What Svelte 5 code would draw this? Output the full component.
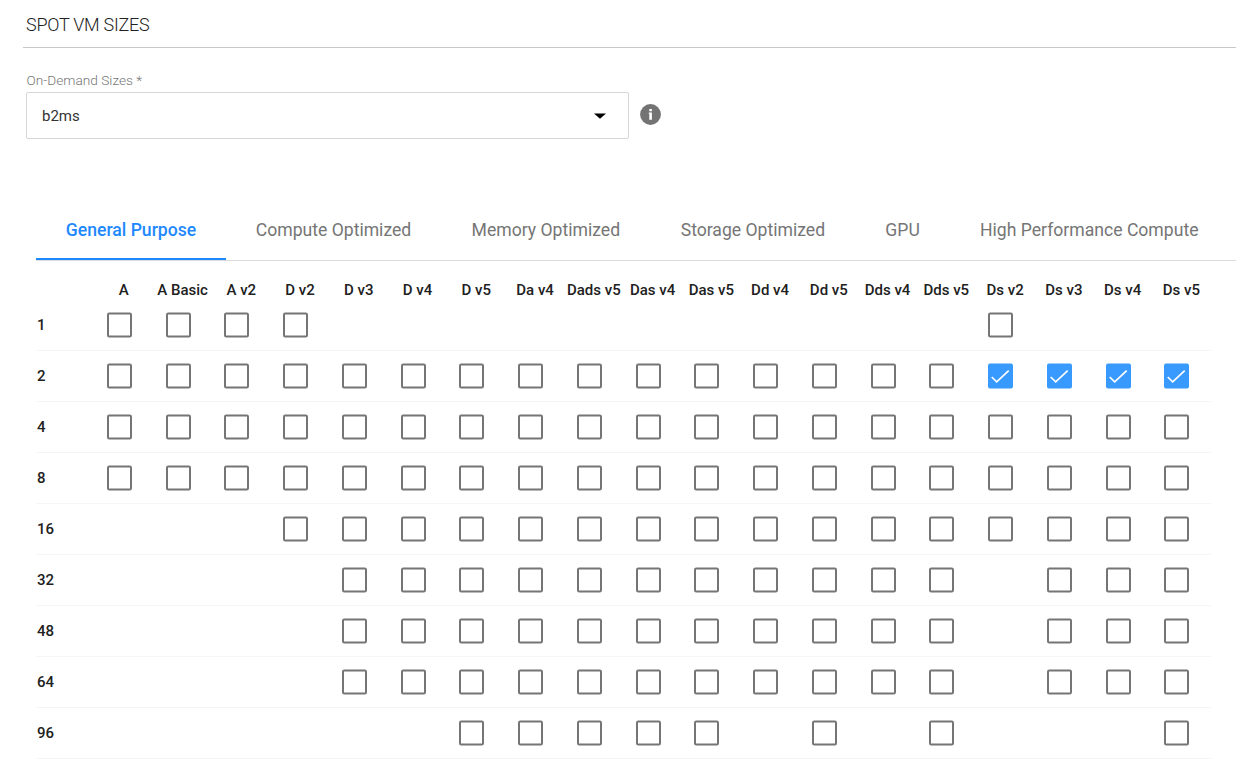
<script>
  const tabs = [
    { name: 'General Purpose', width: 190 },
    { name: 'Compute Optimized', width: 215 },
    { name: 'Memory Optimized', width: 209.6 },
    { name: 'Storage Optimized', width: 204.6 },
    { name: 'GPU', width: 94.8 },
    { name: 'High Performance Compute', width: 278.5 },
  ];
  const families = ['A', 'A Basic', 'A v2', 'D v2', 'D v3', 'D v4', 'D v5', 'Da v4', 'Dads v5', 'Das v4', 'Das v5', 'Dd v4', 'Dd v5', 'Dds v4', 'Dds v5', 'Ds v2', 'Ds v3', 'Ds v4', 'Ds v5'];
  // One character per family: "o" available, "x" selected, "." not offered
  const rows = [
    { cores: 1, cells: 'oooo...........o...' },
    { cores: 2, cells: 'oooooooooooooooxxxx' },
    { cores: 4, cells: 'ooooooooooooooooooo' },
    { cores: 8, cells: 'ooooooooooooooooooo' },
    { cores: 16, cells: '...oooooooooooooooo' },
    { cores: 32, cells: '....ooooooooooo.ooo' },
    { cores: 48, cells: '....ooooooooooo.ooo' },
    { cores: 64, cells: '....ooooooooooo.ooo' },
    { cores: 96, cells: '......ooooo.o.o...o' },
  ];
</script>

<main>
  <h2>SPOT VM SIZES</h2>
  <section class="field">
    <div class="label">On-Demand Sizes *</div>
    <div class="line">
      <div class="select">
        <span>b2ms</span>
        <svg width="12" height="6" viewBox="0 0 12 6"><path d="M0 .5h12L6 5.8z" fill="#000" /></svg>
      </div>
      <svg class="info" width="22" height="22" viewBox="0 0 22 22">
        <circle cx="10.5" cy="10.5" r="10.4" fill="#737373" />
        <path d="M9.3 5h2.6v2.2H9.3zM8.8 8.6h3.1v7.2H9.3v-6h-.5z" fill="#fff" />
      </svg>
    </div>
  </section>
  <nav>
    {#each tabs as tab, i}
      <div class="tab" class:active={i === 0} style="width:{tab.width}px">{tab.name}</div>
    {/each}
  </nav>
  <div class="grid head">
    <span></span>
    {#each families as family}<span class="family">{family}</span>{/each}
  </div>
  {#each rows as row}
    <div class="grid row">
      <span class="cores">{row.cores}</span>
      {#each row.cells as cell}
        <div class="cell">
          {#if cell === 'x'}
            <svg class="box" width="25" height="26" viewBox="0 0 25 26">
              <rect y="0.5" width="25" height="25" rx="2" fill="#3899ff" />
              <path d="M3.7 14l5 4.9L20.7 7.6" fill="none" stroke="#fff" stroke-width="1.7" />
            </svg>
          {:else if cell === 'o'}
            <svg class="box" width="25" height="26" viewBox="0 0 25 26">
              <rect x="1" y="1.5" width="23" height="23" rx="1.2" fill="none" stroke="#757575" stroke-width="2" />
            </svg>
          {/if}
        </div>
      {/each}
    </div>
  {/each}
</main>

<style>
  :global(body) { background: #fff; overflow: hidden; }
  main { box-sizing: border-box; height: 778px; overflow: hidden; font-family: Roboto, sans-serif; color: #212121; }
  h2 { box-sizing: border-box; height: 48px; margin: 0 0 0 23px; padding: 13px 0 0 3px; border-bottom: 1px solid #c8c8c8; font-size: 18px; line-height: 24px; font-weight: 300; letter-spacing: -0.26px; white-space: nowrap; }
  .field { margin-left: 26px; padding-top: 24px; height: 128px; }
  .label { height: 20px; line-height: 17px; font-size: 13.7px; font-weight: 350; color: #777; padding-left: 0.5px; white-space: nowrap; }
  .line { display: flex; }
  .select { box-sizing: border-box; width: 603px; height: 47px; display: flex; align-items: center; justify-content: space-between; padding: 0 22px 0 15px; border: 1px solid #d6d6d9; border-radius: 2px; font-size: 15px; color: #333; }
  .select span { padding-top: 1px; }
  .select svg { margin-top: 1px; }
  .info { display: block; margin: 12px 0 0 11px; }
  nav { box-sizing: border-box; display: flex; height: 61px; margin-left: 36px; border-bottom: 1px solid #dcdcdc; }
  .tab { box-sizing: border-box; flex: none; height: 60px; text-align: center; line-height: 60px; font-size: 17.6px; color: #757575; white-space: nowrap; }
  .active { color: #1e88ff; font-weight: 500; border-bottom: 2px solid #1e88ff; }
  .grid { box-sizing: border-box; display: grid; grid-template-columns: repeat(20, 58.75px); width: 1175px; margin-left: 36px; }
  .head { height: 39px; padding-top: 20px; }
  .family { justify-self: center; padding-right: 0.6px; font-size: 15px; line-height: 18px; font-weight: 500; white-space: nowrap; }
  .row { height: 51px; border-bottom: 1px solid #f5f5f5; }
  .cores { padding: 16px 0 0 1px; line-height: 18px; font-size: 15px; font-weight: 500; }
  .cell { padding: 12px 0 0 12px; }
  .box { display: block; }
</style>
